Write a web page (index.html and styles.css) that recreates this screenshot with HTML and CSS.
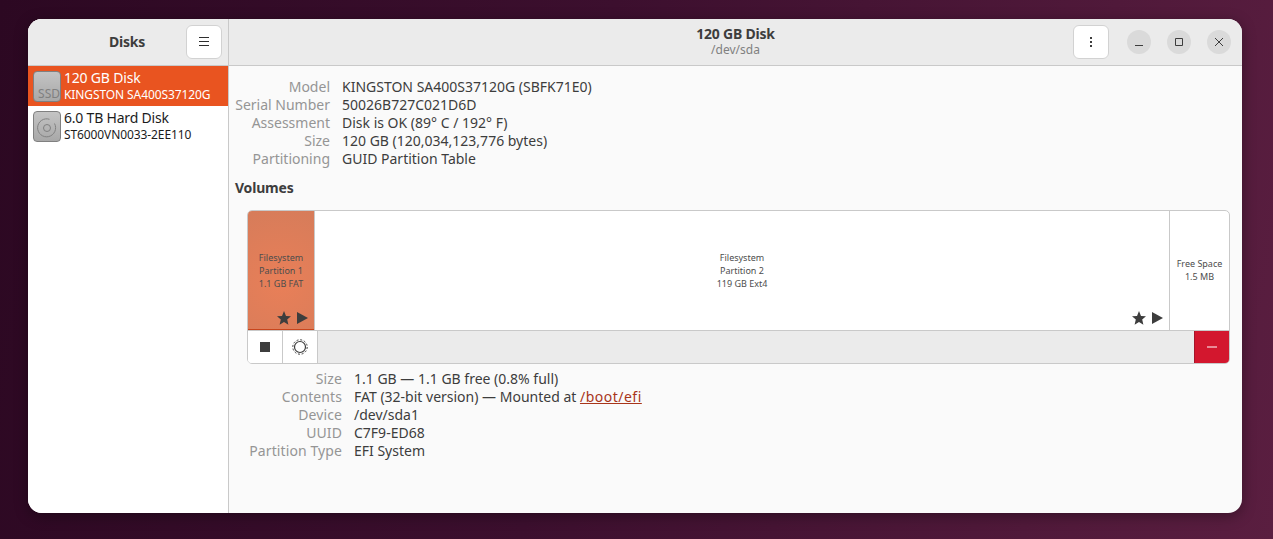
FILE: index.html
```html
<!DOCTYPE html>
<html lang="en">
<head>
    <meta charset="UTF-8">
    <meta name="viewport" content="width=device-width, initial-scale=1.0">
    <title>Disks</title>
    <link rel="stylesheet" href="styles.css">
</head>
<body>
    <div class="window">
        <div class="sidebar">
            <div class="side-head">
                <span class="side-title">Disks</span>
                <button class="head-btn menu-btn">
                    <svg width="12" height="12" viewBox="0 0 12 12"><path d="M1 1.500h10M1 5.500h10M1 9.500h10" stroke="#2e2e2e" fill="none"/></svg>
                </button>
            </div>
            <div class="disk selected">
                <div class="disk-icon">
                    <span class="ssd">SSD</span>
                </div>
                <div class="disk-text">
                    <div class="disk-name">120 GB Disk</div>
                    <div class="disk-model">KINGSTON SA400S37120G</div>
                </div>
            </div>
            <div class="disk">
                <div class="disk-icon">
                    <svg width="26" height="29" viewBox="0 0 26 29" fill="none" stroke="#808080"><path d="M20.500 11.500A9 9 0 1 1 15.500 7.300"/><circle cx="13" cy="16" r="3.500"/></svg>
                </div>
                <div class="disk-text">
                    <div class="disk-name">6.0 TB Hard Disk</div>
                    <div class="disk-model">ST6000VN0033-2EE110</div>
                </div>
            </div>
        </div>
        <div class="main">
            <div class="main-head">
                <div class="head-center">
                    <div class="head-title">120 GB Disk</div>
                    <div class="head-sub">/dev/sda</div>
                </div>
                <button class="head-btn dots-btn">
                    <svg width="4" height="12" viewBox="0 0 4 12"><path d="M1 1h2v2H1zM1 5h2v2H1zM1 9h2v2H1z" fill="#3d3d3d"/></svg>
                </button>
                <div class="win-btns">
                    <button class="win-btn"><svg width="10" height="10" viewBox="0 0 10 10"><path d="M1 8.500h8" stroke="#3d3d3d" fill="none"/></svg></button>
                    <button class="win-btn"><svg width="10" height="10" viewBox="0 0 10 10"><path d="M1.500 1.500h7v7h-7z" stroke="#3d3d3d" fill="none"/></svg></button>
                    <button class="win-btn"><svg width="10" height="10" viewBox="0 0 10 10"><path d="M1 1l8 8M9 1l-8 8" stroke="#3d3d3d" fill="none"/></svg></button>
                </div>
            </div>
            <div class="content">
                <div class="info disk-info">
                    <span class="label">Model</span><span>KINGSTON SA400S37120G (SBFK71E0)</span>
                    <span class="label">Serial Number</span><span>50026B727C021D6D</span>
                    <span class="label">Assessment</span><span>Disk is OK (89° C / 192° F)</span>
                    <span class="label">Size</span><span>120 GB (120,034,123,776 bytes)</span>
                    <span class="label">Partitioning</span><span>GUID Partition Table</span>
                </div>
                <h2 class="volumes-title">Volumes</h2>
                <div class="volumes">
                    <div class="bar">
                        <div class="part part-1">
                            <div class="part-text">Filesystem<br>Partition 1<br>1.1 GB FAT</div>
                            <div class="part-icons">
                                <svg width="14" height="14" viewBox="0 0 14 14"><path d="M7 0l2 4.900 5 .4-3.800 3.300 1.200 5.100L7 11l-4.400 2.700 1.200-5.100L0 5.300l5-.4z" fill="#3d3d3d"/></svg>
                                <svg width="11" height="12" viewBox="0 0 11 12"><path d="M0 0l11 6-11 6z" fill="#3d3d3d"/></svg>
                            </div>
                        </div>
                        <div class="part part-2">
                            <div class="part-text">Filesystem<br>Partition 2<br>119 GB Ext4</div>
                            <div class="part-icons">
                                <svg width="14" height="14" viewBox="0 0 14 14"><path d="M7 0l2 4.900 5 .4-3.800 3.300 1.200 5.100L7 11l-4.400 2.700 1.200-5.100L0 5.300l5-.4z" fill="#3d3d3d"/></svg>
                                <svg width="11" height="12" viewBox="0 0 11 12"><path d="M0 0l11 6-11 6z" fill="#3d3d3d"/></svg>
                            </div>
                        </div>
                        <div class="part part-free">
                            <div class="part-text">Free Space<br>1.5 MB</div>
                        </div>
                    </div>
                    <div class="toolbar">
                        <button class="tool-btn"><span class="stop"></span></button>
                        <button class="tool-btn">
                            <svg width="16" height="16" viewBox="0 0 16 16" fill="none" stroke="#3d3d3d"><circle cx="8" cy="8" r="5.500" stroke-width="1.200"/><circle cx="8" cy="8" r="7.200" stroke-width="1" stroke-dasharray="2 1.770"/></svg>
                        </button>
                        <button class="delete-btn"><svg width="10" height="2" viewBox="0 0 10 2"><path d="M0 1h10" stroke="#fff" fill="none"/></svg></button>
                    </div>
                </div>
                <div class="info part-info">
                    <span class="label">Size</span><span>1.1 GB — 1.1 GB free (0.8% full)</span>
                    <span class="label">Contents</span><span>FAT (32-bit version) — Mounted at <a href="#">/boot/efi</a></span>
                    <span class="label">Device</span><span>/dev/sda1</span>
                    <span class="label">UUID</span><span>C7F9-ED68</span>
                    <span class="label">Partition Type</span><span>EFI System</span>
                </div>
            </div>
        </div>
    </div>
</body>
</html>
```

FILE: styles.css
```css
body {
    margin: 0;
    height: 539px;
    box-sizing: border-box;
    padding: 19px 31px 26px 28px;
    overflow: hidden;
    background: linear-gradient(100deg, #2c0822 0%, #3c0f2e 45%, #5a1e40 100%);
    font-family: "Noto Sans", sans-serif;
    font-size: 14px;
    color: #3d3d3d;
}
.window {
    display: flex;
    height: 494px;
    border-radius: 14px;
    overflow: hidden;
    background: #fafafa;
    box-shadow: 0 3px 14px rgba(0, 0, 0, 0.35);
}
.sidebar {
    width: 200px;
    flex: none;
    background: white;
    border-right: 1px solid #c9c9c9;
}
.side-head, .main-head {
    height: 46px;
    background-color: #ebebeb;
    border-bottom: 1px solid #c9c9c9;
    box-sizing: content-box;
    display: flex;
    align-items: center;
}
.side-title {
    flex: 1;
    text-align: center;
    font-weight: 700;
    padding: 0 0 2px 40px;
    font-size: 14px;
    letter-spacing: -0.2px;
}
.head-btn {
    width: 36px;
    height: 34px;
    padding: 0;
    border: 1px solid #d2d2d2;
    border-radius: 6px;
    background: white;
    display: flex;
    align-items: center;
    justify-content: center;
}
.menu-btn {
    margin-right: 6px;
}
.disk {
    display: flex;
    align-items: center;
    height: 40px;
    padding-left: 5px;
    gap: 3px;
    color: #1c1c1c;
}
.disk.selected {
    background-color: #e95420;
    color: white;
}
.disk-icon {
    width: 26px;
    height: 29px;
    border: 1px solid #808080;
    border-radius: 4px;
    background: linear-gradient(#c4c4c4, #a8a8a8);
    display: flex;
    align-items: center;
    justify-content: center;
    position: relative;
}
.ssd {
    position: absolute;
    bottom: 0;
    right: 0;
    font-size: 12px;
    line-height: 14px;
    color: #808080;
}
.disk-name {
    font-size: 14px;
    line-height: 18px;
    letter-spacing: -0.2px;
}
.disk-model {
    font-size: 12px;
    line-height: 16px;
    letter-spacing: -0.1px;
}
.main {
    flex: 1;
    min-width: 0;
}
.main-head {
    position: relative;
    justify-content: flex-end;
    padding-right: 11px;
}
.head-center {
    position: absolute;
    left: 0;
    right: 0;
    padding-bottom: 2px;
    text-align: center;
}
.head-title {
    font-weight: 700;
    font-size: 14px;
    line-height: 17px;
    letter-spacing: -0.2px;
}
.head-sub {
    font-size: 12px;
    line-height: 15px;
    color: #808080;
}
.dots-btn {
    position: relative;
    margin-right: 18px;
}
.win-btns {
    display: flex;
    gap: 16px;
}
.win-btn {
    width: 24px;
    height: 24px;
    padding: 0;
    border: none;
    border-radius: 50%;
    background-color: #dadada;
    display: flex;
    align-items: center;
    justify-content: center;
}
.content {
    padding: 12px 12px 0 6px;
}
.info {
    display: grid;
    grid-template-columns: 95px auto;
    column-gap: 12px;
    line-height: 18px;
}
.part-info {
    margin: 6px 0 0 12px;
}
.part-info .label {
    letter-spacing: 0.1px;
}
.label {
    text-align: right;
    color: #959595;
    white-space: nowrap;
}
.info a {
    color: #a8351a;
    text-decoration: underline;
    letter-spacing: 0.5px;
}
.volumes-title {
    margin: 11px 0 13px;
    font-size: 14px;
    line-height: 18px;
    font-weight: 700;
    letter-spacing: -0.2px;
}
.volumes {
    margin-left: 12px;
    border: 1px solid #c9c9c9;
    border-radius: 5px;
    overflow: hidden;
    background: white;
}
.bar {
    display: flex;
    height: 119px;
    border-bottom: 1px solid #c9c9c9;
}
.part {
    position: relative;
    display: flex;
    align-items: center;
    justify-content: center;
    text-align: center;
    font-size: 9px;
    line-height: 13px;
    color: #4d4d4d;
}
.part-1 {
    width: 67px;
    flex: none;
    background: radial-gradient(circle at 50% 60%, #e97f58, #d67c5a);
    box-shadow: inset 0 -1px 0 #c8451c;
    border-right: 1px solid #c9c9c9;
    box-sizing: border-box;
}
.part-2 {
    flex: 1;
    border-right: 1px solid #c9c9c9;
}
.part-free {
    width: 59px;
    flex: none;
    padding-bottom: 2px;
    box-sizing: border-box;
}
.part-icons {
    position: absolute;
    right: 6px;
    bottom: 5px;
    display: flex;
    gap: 6px;
    align-items: center;
}
.toolbar {
    display: flex;
    height: 32px;
    background-color: #ebebeb;
}
.tool-btn {
    width: 35px;
    padding: 0;
    border: none;
    border-right: 1px solid #c9c9c9;
    background: white;
    display: flex;
    align-items: center;
    justify-content: center;
}
.stop {
    width: 10px;
    height: 10px;
    background-color: #3d3d3d;
}
.delete-btn {
    margin-left: auto;
    width: 35px;
    padding: 0;
    border: none;
    border-left: 1px solid #a5152a;
    background-color: #d3172e;
    display: flex;
    align-items: center;
    justify-content: center;
}
```
